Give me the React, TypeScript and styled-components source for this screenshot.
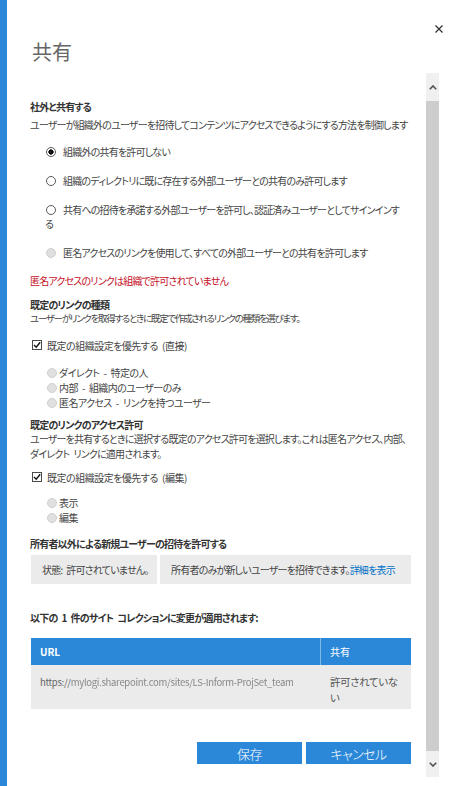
import styled, { createGlobalStyle, css } from "styled-components";

const GlobalStyle = createGlobalStyle`
  html, body {
    margin: 0;
    padding: 0;
    background: #ffffff;
  }
  body {
    font-family: "Noto Sans CJK JP", "Noto Sans", sans-serif;
    font-feature-settings: "palt";
    color: #444444;
  }
`;

const Page = styled.div`
  width: 469px;
  height: 786px;
  display: flex;
  background: #ffffff;
  overflow: hidden;
`;

const Stripe = styled.div`
  width: 7px;
  background: #2b88d8;
  flex-shrink: 0;
`;

const Panel = styled.div`
  flex: 1;
  min-width: 0;
  display: flex;
  flex-direction: column;
`;

const Header = styled.div`
  height: 73px;
  display: flex;
  justify-content: space-between;
  align-items: flex-start;
  padding: 0 25px 0 25px;
  box-sizing: border-box;
`;

const Title = styled.h1`
  margin: 38px 0 0;
  font-size: 20px;
  line-height: 28px;
  font-weight: 400;
  color: #666666;
`;

const CloseButton = styled.button`
  margin-top: 24px;
  width: 10px;
  height: 10px;
  padding: 0;
  border: 0;
  background: transparent;
  display: flex;
  align-items: center;
  justify-content: center;
  cursor: pointer;
`;

const Body = styled.div`
  height: 704px;
  display: flex;
  gap: 15px;
  padding-right: 30px;
`;

const Content = styled.div`
  flex: 1;
  min-width: 0;
  padding: 28px 0 0 23px;
  font-size: 10px;
  letter-spacing: -0.8px;
  word-spacing: 2.5px;
  display: flex;
  flex-direction: column;
`;

const Heading = styled.div<{ $mt?: number }>`
  margin-top: ${(p) => p.$mt ?? 0}px;
  line-height: 12px;
  font-weight: 700;
  color: #333333;
  white-space: nowrap;
`;

const Desc = styled.div<{ $mt?: number; $tight?: boolean }>`
  margin-top: ${(p) => p.$mt ?? 0}px;
  line-height: 15px;
  color: #444444;
  ${(p) =>
    p.$tight &&
    css`
      font-size: 9.5px;
      letter-spacing: -1.3px;
    `}
`;

const ErrorText = styled.div`
  margin-top: 14px;
  line-height: 14px;
  color: #c50f1f;
`;

const OptionList = styled.div<{ $mt: number }>`
  margin-top: ${(p) => p.$mt}px;
  display: flex;
  flex-direction: column;
  gap: 15px;
`;

const Option = styled.div`
  padding: 0 8px 0 15px;
  line-height: 14px;
  color: #444444;
`;

const radioBase = css`
  display: inline-block;
  box-sizing: border-box;
  border-radius: 50%;
  vertical-align: -1px;
  flex-shrink: 0;
`;

const Radio = styled.span<{ $checked?: boolean; $disabled?: boolean }>`
  ${radioBase};
  width: 10px;
  height: 10px;
  margin: 0 7px 0 1px;
  border: 1px solid ${(p) => (p.$disabled ? "#cfcfcf" : "#5a5a5a")};
  background: ${(p) =>
    p.$disabled
      ? "#dedede"
      : p.$checked
      ? "radial-gradient(circle, #111 0 2.4px, #fff 2.9px)"
      : "#ffffff"};
`;

const SubList = styled.div<{ $mt: number }>`
  margin-top: ${(p) => p.$mt}px;
  padding-left: 17px;
  display: flex;
  flex-direction: column;
`;

const SubOption = styled.div`
  display: flex;
  align-items: center;
  height: 15px;
  color: #444444;
  letter-spacing: -0.6px;
  white-space: pre;
`;

const SubRadio = styled.span`
  ${radioBase};
  width: 10px;
  height: 10px;
  margin-right: 2px;
  border: 1px solid #cfcfcf;
  background: #e0e0e0;
`;

const CheckRow = styled.label<{ $mt: number }>`
  margin-top: ${(p) => p.$mt}px;
  display: flex;
  align-items: center;
  height: 14px;
  padding-left: 2px;
  color: #444444;
  letter-spacing: -0.5px;
  white-space: pre;
`;

const CheckBox = styled.span`
  width: 10px;
  height: 10px;
  box-sizing: border-box;
  border: 1px solid #4a4a4a;
  background: #ffffff;
  margin-right: 5px;
  display: flex;
  align-items: center;
  justify-content: center;
`;

const StatusBox = styled.div`
  margin: 5px 0 0 1px;
  display: grid;
  grid-template-columns: 126px 1fr;
  gap: 3px;
  height: 29px;
`;

const StatusCell = styled.div`
  background: #ebebeb;
  display: flex;
  align-items: center;
  padding-left: 11px;
  color: #444444;
  white-space: nowrap;
  overflow: hidden;
`;

const Link = styled.a`
  color: #0072c6;
  text-decoration: none;
`;

const Table = styled.div`
  margin: 14px 0 0 1px;
  display: grid;
  grid-template-columns: 289px 1fr;
  letter-spacing: 0;
  word-spacing: 0;
`;

const HeadCell = styled.div<{ $divider?: boolean }>`
  height: 27px;
  background: #2b88d8;
  color: #ffffff;
  display: flex;
  align-items: center;
  padding-left: 9px;
  font-size: 10px;
  font-weight: ${(p) => (p.$divider ? 400 : 700)};
  border-left: ${(p) => (p.$divider ? "1px solid #82b9e8" : "0")};
`;

const UrlCell = styled.div`
  height: 44px;
  box-sizing: border-box;
  background: #ebebeb;
  padding: 9px 9px 0;
  line-height: 16px;
  color: #666666;
  font-size: 9.5px;
  letter-spacing: -0.3px;
  white-space: nowrap;
  overflow: hidden;
`;

const StateCell = styled.div`
  height: 44px;
  box-sizing: border-box;
  background: #ebebeb;
  border-left: 1px solid #ebebeb;
  padding: 9px 10px 0 9px;
  line-height: 16px;
  color: #555555;
  font-size: 10.5px;
  letter-spacing: -0.4px;
`;

const Blurred = styled.span`
  filter: blur(0.6px);
  color: #888888;
`;

const Actions = styled.div`
  margin-top: 33px;
  display: flex;
  justify-content: flex-end;
  gap: 4px;
`;

const Button = styled.button`
  width: 105px;
  height: 22px;
  border: 0;
  background: #2b88d8;
  color: #ffffff;
  font-family: inherit;
  font-feature-settings: "palt";
  font-size: 13px;
  letter-spacing: -0.6px;
  font-weight: 300;
  padding: 0;
  cursor: pointer;
`;

const Scrollbar = styled.div`
  width: 13px;
  flex-shrink: 0;
  display: flex;
  flex-direction: column;
  background: #f0f0f0;
`;

const ScrollArrow = styled.div<{ $h: number }>`
  height: ${(p) => p.$h}px;
  display: flex;
  align-items: center;
  justify-content: center;
`;

const Thumb = styled.div`
  flex: 1;
  background: #cdcdcd;
`;

const Chevron = ({ down }: { down?: boolean }) => (
  <svg width="8" height="5" viewBox="0 0 8 5">
    <path
      d={down ? "M0.8 0.8 L4 4 L7.2 0.8" : "M0.8 4.2 L4 1 L7.2 4.2"}
      fill="none"
      stroke="#505050"
      strokeWidth="1.6"
    />
  </svg>
);

const CheckMark = () => (
  <svg width="8" height="8" viewBox="0 0 8 8">
    <path d="M1 4 L3.2 6.2 L7.2 1.2" fill="none" stroke="#111" strokeWidth="1.4" />
  </svg>
);

const externalOptions = [
  { label: "組織外の共有を許可しない", checked: true },
  { label: "組織のディレクトリに既に存在する外部ユーザーとの共有のみ許可します" },
  { label: "共有への招待を承諾する外部ユーザーを許可し、認証済みユーザーとしてサインインする" },
  { label: "匿名アクセスのリンクを使用して、すべての外部ユーザーとの共有を許可します", disabled: true },
];

const linkTypes = ["ダイレクト - 特定の人", "内部 - 組織内のユーザーのみ", "匿名アクセス - リンクを持つユーザー"];
const permissions = ["表示", "編集"];

export default function App() {
  return (
    <Page>
      <GlobalStyle />
      <Stripe />
      <Panel>
        <Header>
          <Title>共有</Title>
          <CloseButton aria-label="閉じる">
            <svg width="8" height="8" viewBox="0 0 8 8">
              <path d="M0.5 0.5 L7.5 7.5 M7.5 0.5 L0.5 7.5" stroke="#333" strokeWidth="1.3" />
            </svg>
          </CloseButton>
        </Header>
        <Body>
          <Content>
            <Heading>社外と共有する</Heading>
            <Desc $mt={4}>ユーザーが組織外のユーザーを招待してコンテンツにアクセスできるようにする方法を制御します</Desc>
            <OptionList $mt={13}>
              {externalOptions.map((o) => (
                <Option key={o.label}>
                  <Radio $checked={o.checked} $disabled={o.disabled} />
                  {o.label}
                </Option>
              ))}
            </OptionList>
            <ErrorText>匿名アクセスのリンクは組織で許可されていません</ErrorText>

            <Heading $mt={11}>既定のリンクの種類</Heading>
            <Desc $tight>ユーザーがリンクを取得するときに既定で作成されるリンクの種類を選びます。</Desc>
            <CheckRow $mt={12}>
              <CheckBox>
                <CheckMark />
              </CheckBox>
              既定の組織設定を優先する (直接)
            </CheckRow>
            <SubList $mt={13}>
              {linkTypes.map((t) => (
                <SubOption key={t}>
                  <SubRadio />
                  {t}
                </SubOption>
              ))}
            </SubList>

            <Heading $mt={9}>既定のリンクのアクセス許可</Heading>
            <Desc>
              ユーザーを共有するときに選択する既定のアクセス許可を選択します。これは匿名アクセス、内部、ダイレクト リンクに適用されます。
            </Desc>
            <CheckRow $mt={9}>
              <CheckBox>
                <CheckMark />
              </CheckBox>
              既定の組織設定を優先する (編集)
            </CheckRow>
            <SubList $mt={11}>
              {permissions.map((t) => (
                <SubOption key={t}>
                  <SubRadio />
                  {t}
                </SubOption>
              ))}
            </SubList>

            <Heading $mt={13}>所有者以外による新規ユーザーの招待を許可する</Heading>
            <StatusBox>
              <StatusCell>状態: 許可されていません。</StatusCell>
              <StatusCell>
                所有者のみが新しいユーザーを招待できます。<Link href="#">詳細を表示</Link>
              </StatusCell>
            </StatusBox>

            <Heading $mt={28}>以下の 1 件のサイト コレクションに変更が適用されます:</Heading>
            <Table>
              <HeadCell>URL</HeadCell>
              <HeadCell $divider>共有</HeadCell>
              <UrlCell>
                https://<Blurred>mylogi.sharepoint.com/sites/LS-Inform-ProjSet_team</Blurred>
              </UrlCell>
              <StateCell>許可されていない</StateCell>
            </Table>

            <Actions>
              <Button>保存</Button>
              <Button>キャンセル</Button>
            </Actions>
          </Content>
          <Scrollbar>
            <ScrollArrow $h={28}>
              <Chevron />
            </ScrollArrow>
            <Thumb />
            <ScrollArrow $h={26}>
              <Chevron down />
            </ScrollArrow>
          </Scrollbar>
        </Body>
      </Panel>
    </Page>
  );
}
